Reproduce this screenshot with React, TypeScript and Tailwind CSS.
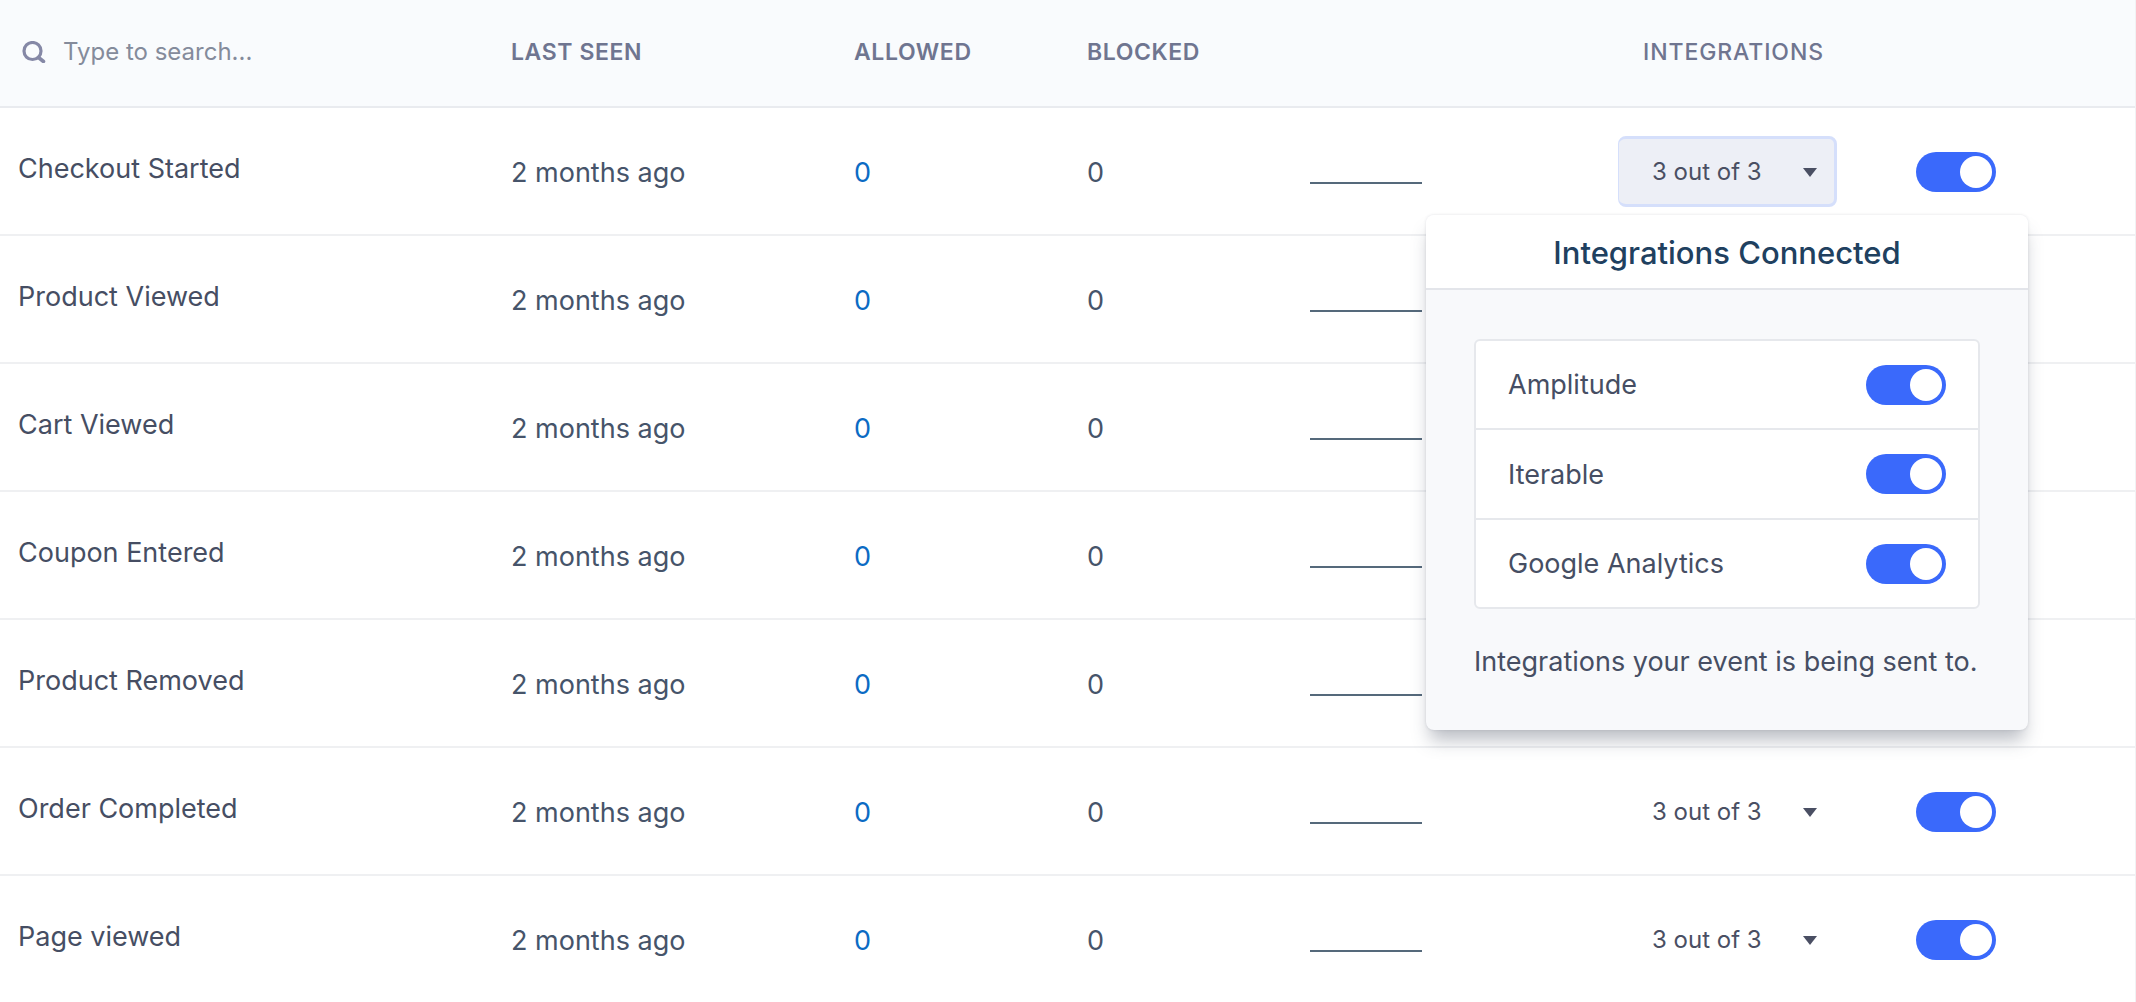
import React from "react"

const events = [
    "Checkout Started",
    "Product Viewed",
    "Cart Viewed",
    "Coupon Entered",
    "Product Removed",
    "Order Completed",
    "Page viewed",
]

const integrations = [
    { name: "Amplitude", row: "h-[89px] border-b-2" },
    { name: "Iterable", row: "h-[90px] border-b-2" },
    { name: "Google Analytics", row: "h-[87px]" },
]

// Blue pill switch, always on in this view
function Toggle() {
    return (
        <div className="flex h-[40px] w-[80px] shrink-0 items-center justify-end rounded-full bg-[#3a69fb] pr-[4px]">
            <div className="size-[32px] rounded-full bg-white" />
        </div>
    )
}

function SearchIcon() {
    return (
        <svg width="24" height="22" viewBox="0 0 24 22" fill="none" className="shrink-0">
            <circle cx="10.5" cy="10" r="8.5" stroke="#8588a6" strokeWidth="3.2" />
            <path d="M16.5 16.5L21.5 20.5" stroke="#8588a6" strokeWidth="3.6" strokeLinecap="round" />
        </svg>
    )
}

function Caret() {
    return (
        <svg width="14" height="9" viewBox="0 0 14 9" className="mt-[2px] shrink-0">
            <path d="M0 0H14L7 9Z" fill="#4a4f63" />
        </svg>
    )
}

function EventRow({ name, open, covered }: { name: string; open: boolean; covered: boolean }) {
    return (
        <div className="flex h-[128px] items-center border-b-2 border-[#eff0f2] text-[27px] text-[#46546a]">
            <div className="w-[511px] pb-[4px] pl-[18px] text-[#464e63]">{name}</div>
            <div className="w-[343px] pt-[4px]">2 months ago</div>
            <div className="w-[233px] pt-[4px] text-[#0b6bc4]">0</div>
            <div className="w-[223px] pt-[4px]">0</div>
            <div className="h-[2px] w-[112px] translate-y-[12px] bg-[#55697b]" />
            {/* rows under the open popover show nothing past the sparkline */}
            {!covered && (
                <>
                    <div className="w-[196px]" />
                    <div
                        className={
                            open
                                ? "flex h-[71px] w-[219px] items-center justify-between rounded-[8px] border-[3px] border-l border-[#d5dffb] bg-[#edeff6] pt-[1px] pr-[17px] pl-[33px] text-[24px] text-[#4a4f63]"
                                : "flex h-[71px] w-[219px] items-center justify-between border-[3px] border-l border-transparent pt-[1px] pr-[17px] pl-[33px] text-[24px] text-[#4a4f63]"
                        }
                    >
                        <span>3 out of 3</span>
                        <Caret />
                    </div>
                    <div className="w-[79px]" />
                    <div className="pt-[2px]">
                        <Toggle />
                    </div>
                </>
            )}
        </div>
    )
}

export default function App() {
    return (
        <div
            className="relative h-[1002px] w-[2136px] overflow-hidden bg-white"
            style={{ fontFamily: "Inter, 'Noto Sans', sans-serif" }}
        >
            <div className="h-[1002px] border-r border-[#f1f2f4]">
                {/* Table header */}
                <div className="flex h-[108px] items-center border-b-2 border-[#e9ebef] bg-[#f9fbfd] pb-[2px] text-[23px] font-semibold tracking-[0.6px] text-[#6f7590]">
                    <div className="flex w-[511px] items-center gap-[17px] pl-[22px] text-[24px] font-normal tracking-normal text-[#848b9b]">
                        <SearchIcon />
                        <span>Type to search...</span>
                    </div>
                    <div className="w-[343px]">LAST SEEN</div>
                    <div className="w-[233px]">ALLOWED</div>
                    <div className="w-[556px]">BLOCKED</div>
                    <div className="font-medium tracking-[0.9px]">INTEGRATIONS</div>
                </div>

                {events.map((name, i) => (
                    <EventRow key={name} name={name} open={i === 0} covered={i > 0 && i < 5} />
                ))}
            </div>

            {/* Integrations popover */}
            <div className="absolute top-[215px] left-[1426px] flex h-[515px] w-[602px] flex-col rounded-[8px] bg-[#f8f9fb] shadow-[0_14px_18px_-4px_rgba(60,70,90,0.35),0_0_3px_rgba(60,70,90,0.15)]">
                <div className="flex h-[75px] shrink-0 items-center justify-center rounded-t-[8px] border-b-2 border-[#e3e5ea] bg-white pt-[3px] text-[31px] font-medium text-[#20405f]">
                    Integrations Connected
                </div>
                <div className="pt-[49px] pr-[48px] pl-[48px]">
                    <div className="rounded-[6px] border-2 border-[#e6e8ec] bg-white">
                        {integrations.map(({ name, row }) => (
                            <div
                                key={name}
                                className={`flex items-center justify-between border-[#e6e8ec] px-[32px] text-[27px] text-[#464e63] ${row}`}
                            >
                                <span className="pt-[2px]">{name}</span>
                                <Toggle />
                            </div>
                        ))}
                    </div>
                    <p className="mt-[33px] text-[27px] whitespace-nowrap text-[#464e63]">
                        Integrations your event is being sent to.
                    </p>
                </div>
            </div>
        </div>
    )
}
